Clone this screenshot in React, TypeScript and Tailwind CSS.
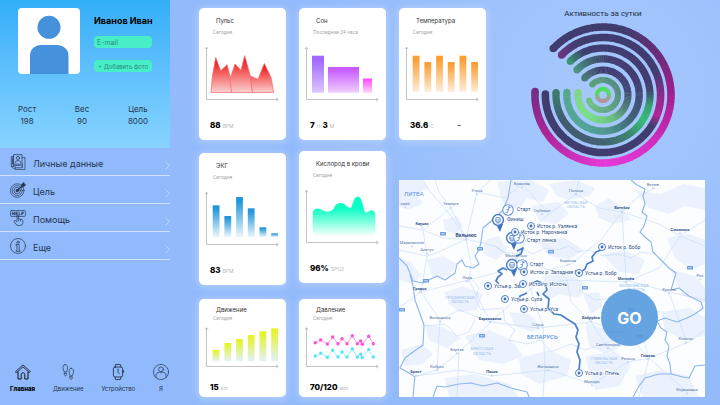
import React, { ReactNode } from "react";
import clsx from "clsx";

const axisTall = "M7.5 54.5V2.5M5.8 4.2L7.5 2.2L9.2 4.2M7.5 54.5H79M77.2 52.8L79.2 54.5L77.2 56.2";
const axisShort = "M7.5 40.5V2M5.8 3.7L7.5 1.7L9.2 3.7M7.5 40.5H79M77.2 38.8L79.2 40.5L77.2 42.2";

function Fade({ id, from, to }: { id: string; from: string; to: string }) {
	return (
		<linearGradient id={id} x1="0" y1="0" x2="0" y2="1">
			<stop offset="0.1" stopColor={from} />
			<stop offset="1" stopColor={to} />
		</linearGradient>
	);
}

type BarsProps = { id: string; from: string; to: string; tops: number[]; bottom: number };

function Bars({ id, from, to, tops, bottom }: BarsProps) {
	return (
		<>
			<defs>
				<Fade id={id} from={from} to={to} />
			</defs>
			{tops.map((top, i) => (
				<rect key={i} x={13.7 + i * 11.7} y={top} width="6.8" height={bottom - top} fill={`url(#${id})`} />
			))}
		</>
	);
}

type CardProps = {
	title: string;
	period: string;
	values: Array<[string, string]>;
	short?: boolean;
	note?: string;
	className?: string;
	children: ReactNode;
};

function MetricCard({ title, period, values, short, note, className, children }: CardProps) {
	return (
		<article
			className={clsx(
				"w-[87px] shrink-0 rounded-[5px] bg-white shadow-[0_1px_7px_2px_rgba(190,215,255,0.65)]",
				short ? "pt-[7px] pb-1" : "pt-[9px] pb-[9px]",
				className
			)}
		>
			<h2 className="pl-[17px] text-[6px] leading-[8px] whitespace-nowrap text-[#333]">{title}</h2>
			<p
				className={clsx(
					"pl-[14px] font-['Roboto'] text-[5px] leading-[6px] whitespace-nowrap text-[#a8a8a8]",
					short ? "mt-px" : "mt-1"
				)}
			>
				{period}
			</p>
			<svg
				viewBox={short ? "0 0 87 43" : "0 0 87 57"}
				className={clsx("block w-full", short ? "mt-[5px] h-[43px]" : "mt-[10px] h-[57px]")}
			>
				{children}
				<path d={short ? axisShort : axisTall} fill="none" stroke="#aaa" strokeWidth="0.7" />
			</svg>
			<p
				className={clsx(
					"flex h-3 items-baseline gap-[2px] pl-[11px] text-[8px] leading-[12px] font-extrabold text-black",
					short ? "mt-3" : "mt-[17px]"
				)}
			>
				{values.map(([value, unit]) => (
					<React.Fragment key={unit}>
						{value}
						<span className="text-[5px] leading-none font-light text-[#999]">{unit}</span>
					</React.Fragment>
				))}
				{note && <span className="ml-auto pr-[25px] leading-none text-[#555]">{note}</span>}
			</p>
		</article>
	);
}

const pressure = [
	[16.3, 16.7],
	[21.7, 14],
	[28.3, 18],
	[33.7, 11],
	[39, 17.7],
	[43, 12.7],
	[48, 17.7],
	[53.3, 9.7],
	[58.3, 17.7],
	[61.7, 15],
	[63.3, 18.3],
	[69.7, 10.3],
	[74.3, 17.7],
];

function DotLine({ color, shift }: { color: string; shift: number }) {
	return (
		<g fill={color}>
			<polyline
				points={pressure.map(([x, y]) => `${x},${y + shift}`).join(" ")}
				fill="none"
				stroke={color}
				strokeWidth="0.6"
			/>
			{pressure.map(([x, y]) => (
				<circle key={x} cx={x} cy={y + shift} r="1.7" />
			))}
		</g>
	);
}

// Stops are [angle, colour]; angle 0 is the left side and grows through the bottom.
type Stop = [number, number[]];

const dark = [64, 60, 111];
const rings: Array<{ r: number; width: number; stops: Stop[] }> = [
	{
		r: 68,
		width: 7.5,
		stops: [
			[-3, [118, 46, 134]],
			[32, [172, 36, 150]],
			[90, [230, 58, 216]],
			[130, [214, 48, 196]],
			[180, [160, 31, 140]],
			[222, [98, 46, 118]],
			[250, dark],
			[317, dark],
		],
	},
	{
		r: 57.6,
		width: 7.5,
		stops: [
			[-1, dark],
			[146, dark],
			[158, [176, 38, 150]],
			[178, [140, 42, 140]],
			[204, dark],
			[295, dark],
			[316, [108, 54, 124]],
		],
	},
	{
		r: 47,
		width: 7.2,
		stops: [
			[-3, [62, 124, 112]],
			[30, [64, 90, 112]],
			[90, [66, 98, 114]],
			[120, [62, 130, 112]],
			[147, [54, 190, 116]],
			[166, [56, 158, 112]],
			[182, [64, 76, 111]],
			[198, dark],
			[292, dark],
			[314, [58, 150, 112]],
		],
	},
	{
		r: 36.2,
		width: 7.2,
		stops: [
			[-4, [84, 168, 142]],
			[60, [80, 165, 150]],
			[100, [76, 146, 140]],
			[140, [64, 96, 116]],
			[200, dark],
			[262, dark],
			[290, [64, 100, 112]],
			[316, [76, 148, 130]],
		],
	},
	{
		r: 25,
		width: 7,
		stops: [
			[-6, [128, 214, 132]],
			[60, [120, 224, 128]],
			[110, [104, 192, 124]],
			[150, [80, 124, 116]],
			[190, [64, 72, 112]],
			[220, dark],
			[275, dark],
			[317, [74, 124, 118]],
		],
	},
	{
		r: 15,
		width: 6,
		stops: [
			[22, [108, 196, 124]],
			[90, [94, 172, 122]],
			[180, [82, 138, 116]],
			[250, [78, 138, 116]],
			[316, [92, 160, 116]],
		],
	},
];

function colourAt(stops: Stop[], angle: number) {
	const next = Math.max(
		1,
		stops.findIndex(([a]) => a >= angle)
	);
	const [a0, c0] = stops[next - 1];
	const [a1, c1] = stops[next];
	const t = Math.min(1, Math.max(0, (angle - a0) / (a1 - a0)));
	return `rgb(${c0.map((c, i) => Math.round(c + (c1[i] - c) * t)).join(",")})`;
}

function pointAt(r: number, angle: number) {
	const rad = (angle * Math.PI) / 180;
	return [-r * Math.cos(rad), r * Math.sin(rad)];
}

function Ring({ r, width, stops }: { r: number; width: number; stops: Stop[] }) {
	const start = stops[0][0];
	const end = stops[stops.length - 1][0];
	const steps: number[] = [];
	for (let a = start; a < end; a += 3) steps.push(a);
	const caps = [start, end].map((a) => [a, ...pointAt(r, a)]);
	return (
		<g>
			{caps.map(([a, x, y]) => (
				<circle key={a} cx={x} cy={y} r={width / 2} fill={colourAt(stops, a)} />
			))}
			{steps.map((a) => {
				const [x0, y0] = pointAt(r, a);
				const [x1, y1] = pointAt(r, Math.min(end, a + 3.6));
				return (
					<path
						key={a}
						d={`M${x0} ${y0}A${r} ${r} 0 0 0 ${x1} ${y1}`}
						stroke={colourAt(stops, a)}
						strokeWidth={width}
						fill="none"
					/>
				);
			})}
		</g>
	);
}

function Activity() {
	return (
		<section className="flex flex-1 flex-col items-center pr-[15px] pl-[30px]">
			<h2 className="font-['Roboto'] text-[8px] leading-[12px] text-[#222b3c]">Активность за сутки</h2>
			<svg viewBox="-73 -73 146 146" className="mt-[2px] size-[146px]">
				<defs>
					<linearGradient id="core" x1="0" y1="0" x2="0" y2="1">
						<stop offset="0.3" stopColor="#54dc62" />
						<stop offset="1" stopColor="#bd8fa0" />
					</linearGradient>
				</defs>
				{rings.map((ring) => (
					<Ring key={ring.r} {...ring} />
				))}
				<circle r="6" fill="none" stroke="url(#core)" strokeWidth="4.4" />
			</svg>
		</section>
	);
}

const land = [
	"M0 0H22L30 8L18 14L24 24L8 30L0 26Z",
	"M44 40L58 36L64 46L56 54L46 50Z",
	"M98 2L132 0L150 10L144 22L128 18L120 30L104 24Z",
	"M150 4L176 0L196 8L190 16L170 20L158 16Z",
	"M132 26L160 22L170 34L156 44L140 40Z",
	"M196 26L210 18L222 26L232 40L214 44L200 38Z",
	"M236 10L262 14L284 4L306 8V30L286 26L270 34L250 28Z",
	"M268 58L290 54L306 60V84L292 90L276 78Z",
	"M0 78L12 82L22 96L14 104L0 100Z",
	"M28 80L44 76L58 84L50 96L34 98Z",
	"M46 112L64 106L84 114L78 130L60 132L50 124Z",
	"M86 60L100 56L108 70L98 80L84 74Z",
	"M138 60L166 58L184 70L170 80L150 76Z",
	"M204 74L226 70L246 80L240 94L220 92Z",
	"M144 96L168 92L186 104L180 118L162 114L148 120Z",
	"M26 144L46 148L62 158L48 168L30 160Z",
	"M2 170L22 164L34 174L24 184L6 186Z",
	"M66 156L90 150L112 160L124 176L104 184L80 180Z",
	"M110 132L130 134L142 146L132 152L116 146Z",
	"M120 178L150 170L172 180L168 196L140 204L122 194Z",
	"M186 142L210 150L224 166L206 174L190 166Z",
	"M186 176L214 172L232 186L220 206L196 210Z",
	"M262 132L292 128L306 138V156L284 160L266 150Z",
	"M236 196L262 190L290 196L300 217H244Z",
	"M46 198L76 194L110 204L120 217H50Z",
	"M184 114L200 112L204 126L192 134Z",
	"M272 90L296 96L306 108V122L284 116Z",
];

const roads = [
	"M36 0L40 12L52 28L60 44L67 59L72 84L70 100L84 128L92 142",
	"M0 46L24 50L44 58L67 59L96 66L117 80L150 90L172 84L202 60L223 32L240 16L256 8",
	"M67 59L52 36L30 10L24 0M67 59L78 12L92 0",
	"M67 59L40 72L28 76L0 70M24 50L28 76L24 100L22 112L0 128",
	"M22 112L46 106L70 100L100 92L117 80L132 110L144 146L146 186L144 217",
	"M17 196L38 190L60 172L92 142L114 122L136 106L168 100L227 102L260 88L281 56L306 40",
	"M92 142L139 148L192 142L226 152L250 178L290 162L306 150",
	"M17 196L60 190L93 196L150 190L193 204L229 182L250 178L288 212",
	"M223 32L227 100L236 130L250 178M177 14L200 28L223 32L260 44L281 56L306 66",
	"M177 14L150 34L132 50L117 80M177 14L180 0M123 4L150 34M41 140L60 130L92 142",
	"M41 140L22 112M41 140L38 190M192 142L209 168L229 182M192 142L172 122L168 100M250 178L240 217",
	"M227 100L270 112L306 120M270 112L287 160M60 172L58 217M78 12L106 18L123 4M52 28L24 50",
];

const borders = [
	"M112 0L109 18L104 30L96 38L84 48L82 62L80 70L76 76L80 84L74 88L66 86L63 80L58 84L56 93L46 100L38 96L30 100L24 103L14 101L11 93L8 86L0 78",
	"M11 94L14 106L16 120L25 145L24 165L14 172L6 178L1 188L10 193L16 197L15 205L14 217",
	"M232 0L238 5L246 9L244 16L246 24L243 32L248 36L245 46L241 52L247 58L252 62L254 72L262 80L270 88L277 93L275 100L272 110L280 108L290 116L302 122L304 128L296 134L288 138L278 142L266 138L258 141L262 148L268 152L266 160L270 166L268 176L271 184L272 194L260 194L246 198L240 206L234 217",
	"M272 194L284 197L290 198L296 186L306 185",
	"M34 217L38 206L46 207L60 204L72 203L84 206L98 203L112 208L128 212L130 217",
];

const regionLines = [
	"M96 66L104 72L118 74L126 70L134 74L146 68L158 70L170 66L178 72L190 70L204 76L220 74L232 78L242 72L254 74",
	"M74 100L80 108L76 118L82 130L104 128L106 142L116 150L110 160L128 164L142 160",
	"M26 146L46 144L58 156L70 152L76 140",
	"M142 160L152 172L172 164L186 170L210 162",
	"M180 110L196 120L214 118L226 128L262 132",
];

type MapLabel = [string, number, number, ("bold" | "region")?];

const towns: MapLabel[] = [
	["Утена", 78, 12],
	["Укмерге", 52, 25],
	["Каунас", 23, 45, "bold"],
	["Алитус", 28, 71],
	["Браслав", 123, 5],
	["Глубокое", 143, 32],
	["Молодечно", 117, 77],
	["Лида", 68, 99],
	["Гродно", 21, 110, "bold"],
	["Мариямполе", 13, 64],
	["ский", 6, 25],
	["Полоцк", 177, 12],
	["ВИТЕБСКАЯ", 177, 24, "region"],
	["ОБЛАСТЬ", 177, 28, "region"],
	["Витебск", 223, 29, "bold"],
	["Велиж", 254, 6],
	["Смоленск", 281, 51, "bold"],
	["Борисов", 169, 82],
	["Могилёв", 227, 100, "bold"],
	["МОГИЛЁВСКАЯ", 235, 107, "region"],
	["ОБЛАСТЬ", 237, 111, "region"],
	["Кричев", 270, 111],
	["Рос", 301, 97],
	["ГРОДНЕНСКАЯ", 61, 119, "region"],
	["ОБЛАСТЬ", 61, 123, "region"],
	["Волковыск", 41, 139],
	["Барановичи", 91, 140, "bold"],
	["Слуцк", 139, 146],
	["Берёза", 58, 171],
	["БРЕСТСКАЯ", 83, 170, "region"],
	["ОБЛАСТЬ", 83, 175, "region"],
	["Кобрин", 38, 188],
	["Брест", 17, 193, "bold"],
	["Пинск", 93, 193, "bold"],
	["Житковичи", 149, 188],
	["Бобруйск", 192, 139, "bold"],
	["Жлобин", 218, 153],
	["Светлогорск", 209, 166],
	["ГОМЕЛЬСКАЯ", 205, 180, "region"],
	["ОБЛАСТЬ", 205, 184, "region"],
	["Речица", 229, 180],
	["Гомель", 249, 177, "bold"],
	["Клинцы", 287, 160],
	["Мозырь", 193, 203],
	["Корюковка", 288, 211],
];

const shields = [
	[41, 52],
	[78, 67],
	[149, 70],
	[24, 99],
	[80, 154],
	[183, 106],
	[288, 86],
	[0, 128],
	[229, 128],
	[238, 155],
];

const rivers = [
	"M202 70L197 72L193 77L194 81L188 84L186 89L182 92",
	"M108 90L104 88L99 91L103 94L99 97L97 101L100 104",
	"M132 104L138 101L146 104L148 110L144 114L150 119L149 128L155 134L162 135L168 139L176 144L179 150L177 157L180 164L178 172L181 180L180 190",
	"M119 122L121 116L128 113M118 71L124 68L122 74L117 76M140 116L138 112",
];

const routePins: Array<[string, number, number]> = [
	["Исток р. Узлянка", 132, 46],
	["Исток р. Нарочанка", 116, 52],
	["Исток р. Бобр", 203, 67],
	["Исток р. Западная Бер", 125, 92],
	["Устье р. Бобр", 180, 93],
	["Устье р. Зап", 89, 106],
	["Исток р. Ислочь", 124, 104],
	["Устье р. Сула", 106, 119],
	["Устье р. Уса", 125, 129],
	["Устье р. Птичь", 180, 193],
];

function FinishPin({ x, y }: { x: number; y: number }) {
	return (
		<g transform={`translate(${x} ${y})`}>
			<path d="M-2 4L2 12L5 4Z" fill="#3f73bd" />
			<circle r="5.4" fill="#fff" stroke="#4a7cc4" strokeWidth="1.5" />
			<rect x="-2.2" y="-2.4" width="4.4" height="4.4" rx="0.8" fill="none" stroke="#4a7cc4" strokeWidth="0.9" />
			<path d="M-2 0H2M-1.6 3H1.6" stroke="#4a7cc4" strokeWidth="0.7" />
		</g>
	);
}

function StartPin({ x, y }: { x: number; y: number }) {
	return (
		<g transform={`translate(${x} ${y})`} fill="none" stroke="#6b9ad9">
			<circle r="5.3" fill="#fff" strokeWidth="1.1" />
			<path d="M-2.4 2.6H-0.6L0.6 -0.4L-1.4 -0.6M0.6 -0.4L1 -2.4H2.6" strokeWidth="1" />
			<circle cx="1" cy="-3" r="0.5" fill="#6b9ad9" />
		</g>
	);
}

function RouteMap() {
	return (
		<section className="relative min-h-[216px] flex-1">
			<svg
				viewBox="0 0 306 217"
				preserveAspectRatio="xMidYMid slice"
				className="absolute inset-0 size-full bg-[#fbfdff] font-['Roboto']"
			>
				<g fill="#ebf2fe">
					{land.map((d) => (
						<path key={d} d={d} />
					))}
				</g>
				<g fill="none" strokeLinejoin="round">
					<g stroke="#c3daf9" strokeWidth="0.6">
						{roads.map((d) => (
							<path key={d} d={d} />
						))}
					</g>
					<g stroke="#b3cef5" strokeWidth="0.6" strokeDasharray="2 0.6">
						{regionLines.map((d) => (
							<path key={d} d={d} />
						))}
					</g>
					<g stroke="#8db5f0" strokeWidth="1.1">
						{borders.map((d) => (
							<path key={d} d={d} />
						))}
					</g>
					<g stroke="#4c7fcb" strokeWidth="1.7">
						{rivers.map((d) => (
							<path key={d} d={d} />
						))}
					</g>
				</g>
				{shields.map(([x, y]) => (
					<g key={`${x}-${y}`}>
						<rect x={x} y={y} width="6" height="3.6" rx="0.6" fill="#6d9ce0" />
						<path d={`M${x + 1.2} ${y + 1.8}H${x + 4.8}`} stroke="#dce9fb" strokeWidth="0.9" />
					</g>
				))}
				{towns.map(([name, x, y, kind]) => (
					<g key={`${name}${x}-${y}`} textAnchor="middle">
						<text
							x={x}
							y={y}
							fontSize="4"
							fontWeight={kind === "bold" ? 700 : 400}
							fill={kind === "region" ? "#9dbdeb" : kind === "bold" ? "#34558c" : "#5474a8"}
						>
							{name}
						</text>
						{kind !== "region" && (
							<circle cx={x} cy={y + 2.4} r="0.7" fill="#fff" stroke="#8aa9d8" strokeWidth="0.4" />
						)}
					</g>
				))}
				<text x="67" y="57" fontSize="5" fontWeight="700" textAnchor="middle" fill="#2f4f86">
					Вильнюс
				</text>
				<circle cx="67" cy="60" r="0.9" fill="#fff" stroke="#8aa9d8" strokeWidth="0.4" />
				<g fill="#5f92df">
					<text x="5" y="15.5" fontSize="6">
						ЛИТВА
					</text>
					<text x="128" y="159" fontSize="6" fontWeight="500">
						БЕЛАРУСЬ
					</text>
				</g>
				<FinishPin x={99} y={40} />
				<StartPin x={109} y={30} />
				<FinishPin x={113} y={58} />
				<StartPin x={120} y={58} />
				<FinishPin x={113} y={85} />
				<StartPin x={123} y={85} />
				<g fontSize="5" fill="#2c4f88" stroke="#fff" strokeWidth="1" paintOrder="stroke">
					<text x="118" y="31">Старт</text>
					<text x="108" y="41">Финиш</text>
					<text x="128" y="62">Старт</text>
					<text x="143" y="62">лянка</text>
					<text x="131" y="86">Старт</text>
				</g>
				{routePins.map(([name, x, y]) => (
					<g key={name}>
						<text
							x={x + 6}
							y={y + 1.8}
							fontSize="5"
							fill="#2c4f88"
							stroke="#fff"
							strokeWidth="1"
							paintOrder="stroke"
						>
							{name}
						</text>
						<circle cx={x} cy={y} r="3.5" fill="#fff" stroke="#4f80c8" strokeWidth="1" />
						<circle cx={x} cy={y} r="1.4" fill="#3d6db8" />
					</g>
				))}
			</svg>
			<button
				type="button"
				className="absolute right-[47px] bottom-[51px] size-[57px] rounded-full bg-[#559ade]/90 text-[16px] font-bold text-white"
			>
				GO
			</button>
		</section>
	);
}

function Icon({ children, className }: { children: ReactNode; className?: string }) {
	return (
		<svg
			viewBox="0 0 16 16"
			fill="none"
			stroke="currentColor"
			strokeWidth="0.7"
			strokeLinecap="round"
			strokeLinejoin="round"
			className={clsx("size-4 shrink-0", className)}
		>
			{children}
		</svg>
	);
}

const menu = [
	{
		title: "Личные данные",
		icon: (
			<>
				<path d="M3.5 2.5H1.3V12.5H4M1.3 12.5L3.2 14.3H5M12.5 3.6H15V15.6H5.2V12.5" />
				<rect x="4" y="0.6" width="8" height="9.6" />
				<path d="M3 2.8V11.4H10.6L12.6 13.2V10.2M2.6 4.5V10M6 13.8H12" />
				<circle cx="8" cy="3.9" r="1.6" />
				<path d="M5.2 8.6C5.4 5.8 10.6 5.8 10.8 8.6" />
			</>
		),
	},
	{
		title: "Цель",
		icon: (
			<>
				<circle cx="7.2" cy="8.6" r="6.8" />
				<circle cx="7.2" cy="8.6" r="5" />
				<circle cx="7.2" cy="8.6" r="3.2" />
				<circle cx="7.2" cy="8.6" r="1.3" fill="currentColor" />
				<path d="M7.2 8.6L13 3.2" strokeWidth="1.3" />
				<path d="M11.6 4.6L11.8 2.2L14 0.4V2.2L15.8 2.4L14 4.4Z" fill="currentColor" />
			</>
		),
	},
	{
		title: "Помощь",
		icon: (
			<>
				<rect x="0.6" y="0.6" width="14.8" height="5.8" rx="0.8" />
				<path
					d="M2.6 2.2V4.8M4.4 2.2V4.8M2.6 3.5H4.4M7.4 2.2H5.9V4.8H7.4M5.9 3.5H7.2M9 2.2V4.8H10.4M11.8 4.8V2.2H13.3V3.6H11.8"
					strokeWidth="0.8"
				/>
				<path d="M7 10.8V5.8C7 4.8 8.6 4.8 8.6 5.8V9C9.6 8.5 10.4 8.8 10.6 9.4C11.6 9 12.8 9.4 12.8 10.6V12.6C12.8 14.6 11.8 15.5 9.6 15.5H8.4C6.2 15.5 5.4 13.6 4.2 11.6C3.8 10.6 5 10 5.8 10.8L7 12.2M10.6 9.6V11M8.6 9V11" />
			</>
		),
	},
	{
		title: "Еще",
		icon: (
			<>
				<circle cx="8" cy="8" r="7.5" />
				<circle cx="8" cy="4.2" r="1.2" />
				<path d="M6.3 6.4H9.2V12.2H10V13.4H6.2V12.2H7V7.6H6.3Z" />
			</>
		),
	},
];

const tabs = [
	{
		title: "Главная",
		icon: (
			<>
				<path d="M0.6 7.6L8 0.9L15.4 7.6L14.4 8.6L8 2.8L1.6 8.6Z" />
				<path d="M3 8V15H6.2V10.4C6.2 8.4 9.8 8.4 9.8 10.4V15H13V8" strokeWidth="0.9" />
			</>
		),
	},
	{
		title: "Движение",
		icon: (
			<>
				<path d="M5.2 0.5C7.2 0.3 7.9 3 7.3 5.2L6.6 8H4.2L3.2 5.2C2.5 2.8 3.3 0.7 5.2 0.5ZM4.3 9.2H6.6C7 12.8 4.2 13 4.3 9.2Z" />
				<path d="M11.2 4.2C13.2 4.4 14 6.4 13.4 8.8L12.4 11.8H10L9.3 9C8.6 6.4 9.2 4 11.2 4.2ZM9.9 12.8H12.3C12.3 16.4 9.6 16.2 9.9 12.8Z" />
			</>
		),
	},
	{
		title: "Устройство",
		icon: (
			<g strokeWidth="0.9">
				<rect x="3.4" y="3" width="9.2" height="10" rx="1.8" />
				<path d="M5 3L5.6 0.5H10.4L11 3M5 13L5.6 15.5H10.4L11 13M8 5V8.2L9.4 9.6M13.6 6.4V8.4" />
			</g>
		),
	},
	{
		title: "Я",
		icon: (
			<>
				<circle cx="8" cy="8" r="7.6" />
				<circle cx="8" cy="5.3" r="2.4" />
				<path d="M3 13.6V11.2C3 9 4.6 8.4 6.4 8.2C7.4 9 8.6 9 9.6 8.2C11.4 8.4 13 9 13 11.2V13.6" />
			</>
		),
	},
];

const stats = [
	["Рост", "198"],
	["Вес", "90"],
	["Цель", "8000"],
];

function Sidebar() {
	return (
		<aside className="flex w-[170px] shrink-0 flex-col bg-[#91bafc] text-[#25364f]">
			<header className="bg-linear-to-b from-[#31aef9] to-[#86d3ff] px-[18px] pt-2 pb-[21px]">
				<div className="flex gap-[14px]">
					<svg viewBox="0 0 62 66" className="h-[66px] w-[62px] rounded-[4px] bg-white" fill="#4591db">
						<circle cx="31" cy="19.3" r="11.5" />
						<path d="M12 66V48C12 41 17 37 23 37H39C45 37 50.5 41 50.5 48V66Z" />
					</svg>
					<div className="flex min-w-0 flex-1 flex-col pt-2">
						<h1 className="text-[9px] leading-[10px] font-bold whitespace-nowrap text-black">Иванов Иван</h1>
						<input
							type="email"
							aria-label="E-mail"
							placeholder="E-mail"
							className="mt-[10px] h-3 w-[58px] rounded-[4px] bg-[#47eec8] px-[3px] text-[7px] placeholder:text-[#2b8c7e]"
						/>
						<button
							type="button"
							className="mt-3 h-3 w-[58px] rounded-[4px] bg-[#47eec8] text-[6px] whitespace-nowrap text-[#2b8c7e]"
						>
							+ Добавить фото
						</button>
					</div>
				</div>
				<dl className="mt-[29px] flex justify-between pr-1 text-center text-[8px] leading-[12px]">
					{stats.map(([name, value]) => (
						<div key={name}>
							<dt>{name}</dt>
							<dd>{value}</dd>
						</div>
					))}
				</dl>
			</header>
			<ul>
				{menu.map(({ title, icon }) => (
					<li key={title} className="border-b border-[#cfe1ff]">
						<a href="#" className="flex h-[27px] items-center pl-[10px] text-[9px]">
							<Icon>{icon}</Icon>
							<span className="pt-1 pl-[7px]">{title}</span>
							<svg
								viewBox="0 0 5 9"
								className="mt-2 ml-auto h-[9px] w-[5px]"
								fill="none"
								stroke="#c9deff"
								strokeWidth="0.9"
							>
								<path d="M0.6 0.6L4.4 4.5L0.6 8.4" />
							</svg>
						</a>
					</li>
				))}
			</ul>
			<nav className="mt-auto flex justify-between pr-px pb-3 pl-[10px] text-[6px] leading-[8px]">
				{tabs.map(({ title, icon }, i) => (
					<a
						key={title}
						href="#"
						className={clsx("flex flex-col items-center gap-[5px]", i === 0 && "font-extrabold text-black")}
					>
						<Icon>{icon}</Icon>
						{title}
					</a>
				))}
			</nav>
		</aside>
	);
}

export default function App() {
	return (
		<div className="flex min-h-screen bg-[#93bbfc] font-['Inter']">
			<Sidebar />
			<main className="flex flex-1 gap-[13px] bg-[radial-gradient(circle_at_78%_24%,#a6c8fd_0%,#9fc3fc_22%,#93bafb_55%)] py-2 pr-[15px] pl-[29px]">
				<div className="flex flex-col gap-[13px]">
					<MetricCard title="Пульс" period="Сегодня" values={[["88", "BPM"]]}>
						<defs>
							<Fade id="pulse" from="#f01818" to="#fcd0d0" />
						</defs>
						<g fill="url(#pulse)" stroke="#f26a6a" strokeWidth="0.7" strokeLinejoin="round">
							<path d="M12 47.5L13.3 31.7L16.7 12.5L21.7 25.7L28 19.7L31.7 33.7L33 47.5Z" />
							<path d="M32.5 47.5L31 34L36 19L42 25.3L45.7 10.7L51.3 30.7L53.7 47.5Z" />
							<path d="M53.5 47.5L51.3 31L59 34.3L65.3 18.5L72 32.3L74.7 47.5Z" />
						</g>
					</MetricCard>
					<MetricCard title="ЭКГ" period="Сегодня" values={[["83", "BPM"]]}>
						<Bars
							id="ecg"
							from="#2196da"
							to="#eef6fd"
							tops={[15.3, 26, 7, 18.3, 37.3, 43.3]}
							bottom={47}
						/>
					</MetricCard>
					<MetricCard title="Движение" period="Сегодня" values={[["15", "km"]]} short className="mt-auto">
						<Bars id="move" from="#e2f52b" to="#e3f1fa" tops={[24, 17, 13, 9, 5.3, 2.3]} bottom={35} />
					</MetricCard>
				</div>
				<div className="flex flex-col gap-[11px]">
					<MetricCard
						title="Сон"
						period="Последние 24 часа"
						values={[
							["7", "H"],
							["3", "M"],
						]}
					>
						<defs>
							<Fade id="sleepA" from="#a268ff" to="#dcc6ff" />
							<Fade id="sleepB" from="#c95cff" to="#efcffc" />
							<Fade id="sleepC" from="#ff52ff" to="#ffd6fc" />
						</defs>
						<rect x="13" y="10.7" width="12" height="37" fill="url(#sleepA)" />
						<rect x="29" y="22" width="31" height="25.7" fill="url(#sleepB)" />
						<rect x="64" y="33.5" width="9" height="14.2" fill="url(#sleepC)" />
					</MetricCard>
					<MetricCard title="Кислород в крови" period="Сегодня" values={[["96%", "SPO2"]]}>
						<defs>
							<linearGradient id="oxygen" x1="0" y1="0" x2="0" y2="1">
								<stop offset="0.3" stopColor="#0cffc4" />
								<stop offset="1" stopColor="#f2fffb" />
							</linearGradient>
						</defs>
						<path
							d="M13.7 47.3V24C14.4 21.6 16.4 20.5 18.7 20.6C22 20.8 24 23.6 28 23.6C31 23.6 33 23 34.6 20.8C36.6 16.6 38.6 15 41.7 15C46.4 15 47.4 19.6 51.4 20C54 19.6 53.6 8.6 58.7 8.6C64.4 8.6 63.6 24.3 67.2 24.4C69.4 24.3 70.6 22.3 72.6 22.3C74.6 22.3 75.8 23.6 76.3 25.6V47.3Z"
							fill="url(#oxygen)"
						/>
					</MetricCard>
					<MetricCard title="Давление" period="Сегодня" values={[["70/120", "atm"]]} short className="mt-auto">
						<DotLine color="#ff52cf" shift={0} />
						<DotLine color="#54e4fb" shift={13.3} />
					</MetricCard>
				</div>
				<div className="flex min-w-0 flex-1 flex-col">
					<div className="flex min-h-[172px] items-start">
						<MetricCard title="Температура" period="Сегодня" values={[["36.6", "C"]]} note="-">
							<Bars
								id="temp"
								from="#fb9f34"
								to="#fdeedd"
								tops={[10.7, 17, 10.7, 17, 10.7, 17]}
								bottom={47}
							/>
						</MetricCard>
						<Activity />
					</div>
					<RouteMap />
				</div>
			</main>
		</div>
	);
}
